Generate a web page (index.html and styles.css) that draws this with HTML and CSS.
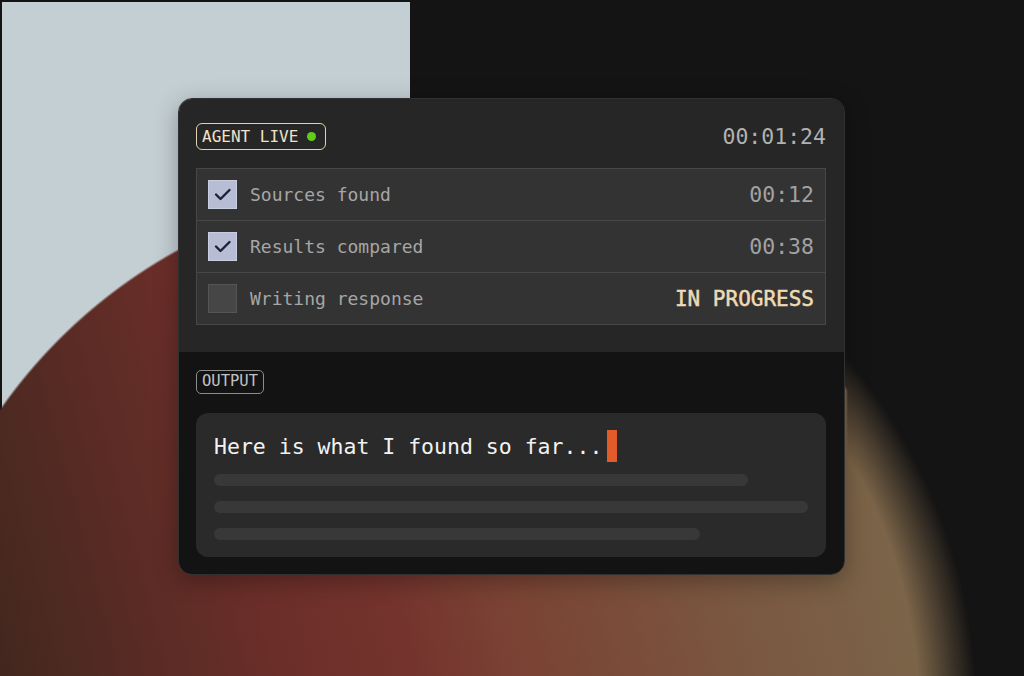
FILE: index.html
```html
<!DOCTYPE html>
<html lang="en">
<head>
<meta charset="utf-8">
<title>Agent Live</title>
<link rel="stylesheet" href="styles.css">
</head>
<body>
<div class="scene">
  <div class="bg-light"></div>
  <div class="blob-layer blob-layer-soft"><div class="blob blob-soft"></div></div>
  <div class="blob-layer blob-layer-sharp"><div class="blob blob-sharp"></div></div>

  <div class="card">
    <section class="card-top">
      <header class="card-header">
        <span class="badge badge-live">AGENT LIVE <span class="live-dot"></span></span>
        <span class="timer">00:01:24</span>
      </header>
      <ul class="steps">
        <li class="step">
          <span class="check is-done">
            <svg viewBox="0 0 29 29" width="29" height="29"><polyline points="8,14.5 12.5,19 21.5,10" fill="none" stroke="#1f2230" stroke-width="2.4" stroke-linecap="round" stroke-linejoin="round"/></svg>
          </span>
          <span class="step-label">Sources found</span>
          <span class="step-time">00:12</span>
        </li>
        <li class="step">
          <span class="check is-done">
            <svg viewBox="0 0 29 29" width="29" height="29"><polyline points="8,14.5 12.5,19 21.5,10" fill="none" stroke="#1f2230" stroke-width="2.4" stroke-linecap="round" stroke-linejoin="round"/></svg>
          </span>
          <span class="step-label">Results compared</span>
          <span class="step-time">00:38</span>
        </li>
        <li class="step">
          <span class="check"></span>
          <span class="step-label">Writing response</span>
          <span class="step-status">IN PROGRESS</span>
        </li>
      </ul>
    </section>

    <section class="card-bottom">
      <span class="badge badge-output">OUTPUT</span>
      <div class="output">
        <div class="output-line">
          <span class="output-text">Here is what I found so far...</span>
          <span class="cursor"></span>
        </div>
        <div class="skeleton s1"></div>
        <div class="skeleton s2"></div>
        <div class="skeleton s3"></div>
      </div>
    </section>
  </div>
</div>
</body>
</html>
```

FILE: styles.css
```css
* { box-sizing: border-box; }

html, body {
  margin: 0;
  padding: 0;
  background: #141414;
}

body {
  font-family: "DejaVu Sans Mono", "Liberation Mono", monospace;
}

.scene {
  position: relative;
  width: 1024px;
  height: 676px;
  overflow: hidden;
  background: #141414;
  padding: 98px 0 0 178px;
}

.bg-light {
  position: absolute;
  left: 2px;
  top: 2px;
  width: 408px;
  height: 674px;
  background: #c4cfd4;
}

/* decorative blob: sharp on the left, soft on the right */
.blob-layer {
  position: absolute;
  left: 0;
  top: 0;
  width: 1024px;
  height: 676px;
}

.blob-layer-sharp {
  -webkit-mask-image: linear-gradient(to right, #000 846px, transparent 848px);
  mask-image: linear-gradient(to right, #000 846px, transparent 848px);
}

.blob-layer-soft {
  -webkit-mask-image: linear-gradient(to right, transparent 800px, #000 812px);
  mask-image: linear-gradient(to right, transparent 800px, #000 812px);
}

.blob {
  position: absolute;
  left: -135px;
  top: 145px;
  width: 1132px;
  height: 1132px;
  background: linear-gradient(75deg,
    #2f231e 10%,
    #45281f 22%,
    #6b2e29 40%,
    #74332d 49%,
    #7a4234 57%,
    #7a5640 72%,
    #7b6549 86%);
}

.blob-sharp {
  -webkit-mask-image: radial-gradient(circle at center, #000 524.5px, transparent 527px);
  mask-image: radial-gradient(circle at center, #000 524.5px, transparent 527px);
}

.blob-soft {
  -webkit-mask-image: radial-gradient(circle at center, #000 488px, transparent 546px);
  mask-image: radial-gradient(circle at center, #000 488px, transparent 546px);
}

.card {
  position: relative;
  z-index: 1;
  width: 667px;
  border: 1px solid #313131;
  border-radius: 14px;
  overflow: hidden;
  box-shadow: 0 6px 24px rgba(0, 0, 0, 0.3);
}

.card-top {
  background: #262626;
  padding: 24px 18px 27px 17px;
}

.card-header {
  display: flex;
  align-items: center;
  justify-content: space-between;
  height: 27px;
  margin-bottom: 18px;
}

.badge {
  display: inline-flex;
  align-items: center;
  font-size: 16px;
  line-height: 1;
}

.badge-live {
  height: 27px;
  padding: 0 9px 0 5px;
  border: 1.5px solid #e4d1ab;
  border-radius: 6px;
  color: #efe2c8;
}

.live-dot {
  width: 9px;
  height: 9px;
  margin-left: 9px;
  border-radius: 50%;
  background: #63cc1b;
}

.timer {
  font-size: 21.5px;
  color: #b2b2b2;
}

.steps {
  list-style: none;
  margin: 0;
  padding: 0;
  background: #333333;
  border: 1px solid #474747;
}

.step {
  display: flex;
  align-items: center;
  height: 51px;
  padding: 0 11px;
}

.step + .step {
  border-top: 1px solid #474747;
  height: 52px;
}

.check {
  width: 29px;
  height: 29px;
  flex: none;
  margin-right: 13px;
  background: #464646;
  border: 1px solid #555555;
}

.check svg { display: block; margin: -1px; }

.check.is-done {
  background: #b6bdd4;
  border-color: #c9cede;
}

.step-label {
  flex: 1;
  font-size: 18px;
  color: #a6a6a6;
}

.step-time {
  font-size: 21.5px;
  color: #a2a2a2;
}

.step-status {
  font-size: 21px;
  color: #eedbb6;
  -webkit-text-stroke: 0.5px #eedbb6;
}

.card-bottom {
  background: #131313;
  padding: 18px 18px 17px 17px;
}

.badge-output {
  height: 24px;
  padding: 0 5px;
  border: 1.5px solid #8c8c8c;
  border-radius: 5px;
  color: #c2c2c2;
  font-size: 15.5px;
}

.output {
  margin-top: 19px;
  background: #2a2a2a;
  border-radius: 12px;
  padding: 17px 18px 17px 18px;
}

.output-line {
  display: flex;
  align-items: center;
  height: 32px;
}

.output-text {
  font-size: 21.5px;
  color: #f2f2f2;
  white-space: pre;
}

.cursor {
  width: 10px;
  height: 32px;
  margin-left: 5px;
  background: #e25b2b;
}

.skeleton {
  height: 12px;
  border-radius: 6px;
  background: #383838;
  margin-top: 15px;
}

.skeleton.s1 { width: 534px; margin-top: 12px; }
.skeleton.s2 { width: 594px; }
.skeleton.s3 { width: 486px; }
```
